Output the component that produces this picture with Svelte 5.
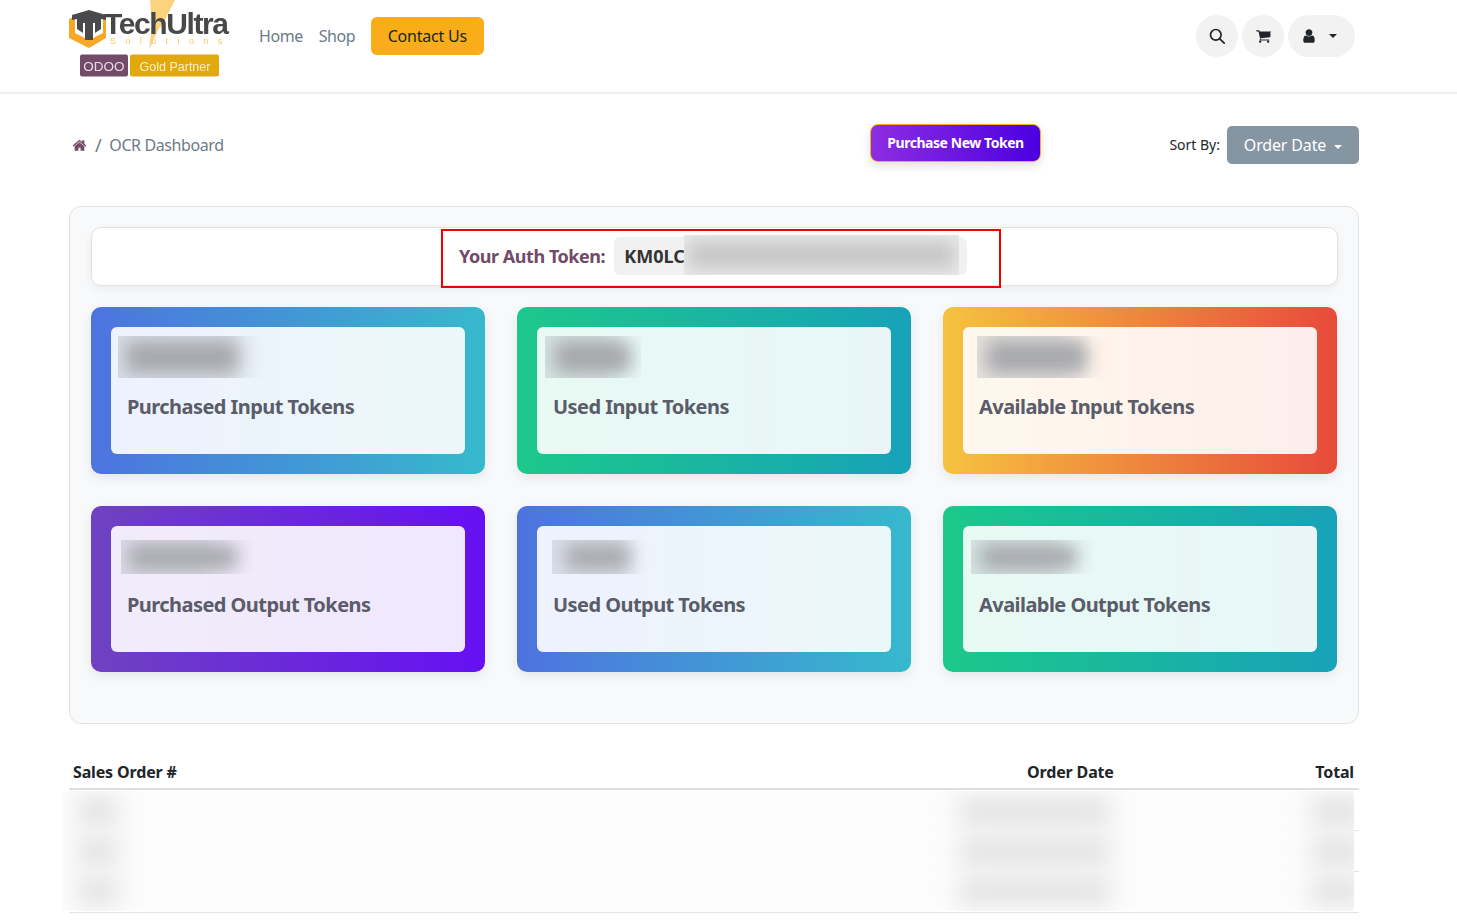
<script>
  const cards = [
    { label: 'Purchased Input Tokens', tone: 'blue', patch: [118, 172, 9, 42], blob: [8, 112], gap: 15 },
    { label: 'Used Input Tokens', tone: 'green', patch: [119, 96, 9, 42], blob: [10, 76], gap: 15 },
    { label: 'Available Input Tokens', tone: 'sunset', patch: [125, 134, 9, 42], blob: [10, 100], gap: 15 },
    { label: 'Purchased Output Tokens', tone: 'violet', patch: [121, 132, 14, 34], blob: [8, 108], gap: 17 },
    { label: 'Used Output Tokens', tone: 'blue', patch: [126, 104, 14, 34], blob: [14, 64], gap: 17 },
    { label: 'Available Output Tokens', tone: 'green', patch: [119, 122, 14, 34], blob: [10, 96], gap: 17 }
  ];
  const rows = [1, 2, 3];
</script>

<header class="topbar">
  <a class="logo" href="#home" aria-label="TechUltra Solutions, Odoo Gold Partner">
    <svg viewBox="0 0 170 78" width="170" height="78">
      <path d="M82 0h25l-11 22-6 8-9 20 3-25z" fill="#fbd27e" />
      <path d="M1 19l6-3v17l14 7 14-7V16l3 3v19L21 48 1 38z" fill="#f9a825" />
      <path d="M4 15l17-5 17 5v5l-5-1v10l-6 4V23h-2v17h-8V23h-2v10l-6-4V19l-5 1z" fill="#4a4a4c" />
      <text x="36" y="34" class="logo-name">TechUltra</text>
      <text x="42" y="44" class="logo-sub">Solutions</text>
      <rect x="12" y="54.500" width="48" height="22" rx="2" fill="#714b67" />
      <text x="36" y="70.500" class="badge-text">ODOO</text>
      <rect x="62" y="54.500" width="89" height="22" rx="2" fill="#e2a90f" />
      <text x="107" y="70.500" class="badge-text small">Gold Partner</text>
    </svg>
  </a>
  <nav class="menu">
    <a href="#home">Home</a>
    <a href="#shop">Shop</a>
    <a class="contact" href="#contact">Contact Us</a>
  </nav>
  <div class="tools">
    <button class="round" aria-label="Search">
      <svg viewBox="0 0 16 16" width="16" height="16" fill="none" stroke="#212529" stroke-width="1.700">
        <circle cx="6.800" cy="6.800" r="5.300" />
        <path d="M10.600 10.600l4.600 4.600" stroke-linecap="round" />
      </svg>
    </button>
    <button class="round" aria-label="Cart">
      <svg viewBox="0 0 1792 1792" width="16" height="16" fill="#212529">
        <path d="M704 1536q0 52-38 90t-90 38-90-38-38-90 38-90 90-38 90 38 38 90zm896 0q0 52-38 90t-90 38-90-38-38-90 38-90 90-38 90 38 38 90zm128-1088v512q0 24-16.500 42.500t-40.500 21.500l-1044 122q13 60 13 70 0 16-24 64h920q26 0 45 19t19 45-19 45-45 19H576q-26 0-45-19t-19-45q0-11 8-31.500t16-36 21.500-40 15.500-29.500l-177-823H192q-26 0-45-19t-19-45 19-45 45-19h256q16 0 28.500 6.500t19.500 15.500 13 24.500 8 26 5.500 29.500 4.500 26h1201q26 0 45 19t19 45z" />
      </svg>
    </button>
    <button class="pill" aria-label="Account">
      <svg viewBox="0 0 1792 1792" width="16" height="16" fill="#212529">
        <path d="M1536 1399q0 109-62.500 187t-150.500 78H469q-88 0-150.500-78T256 1399q0-85 8.500-160.500t31.500-152 58.500-131 94-89T583 832q131 128 313 128t313-128q76 0 134.500 34.500t94 89 58.500 131 31.500 152 8.500 160.500zm-256-887q0 159-112.500 271.500T896 896 624.500 783.500 512 512t112.500-271.500T896 128t271.500 112.500T1280 512z" />
      </svg>
      <span class="caret dark"></span>
    </button>
  </div>
</header>

<main class="page">
  <div class="crumbs">
    <div class="trail">
      <svg viewBox="0 0 1792 1792" width="15" height="15" fill="#714b67">
        <path d="M1472 992v480q0 26-19 45t-45 19h-384v-384H768v384H384q-26 0-45-19t-19-45V992q0-1 .5-3t.5-3l575-474 575 474q1 2 1 6zm223-69l-62 74q-8 9-21 11h-3q-13 0-21-7L896 424l-692 577q-12 8-24 7-13-2-21-11l-62-74q-8-10-7-23.5t11-21.5l719-599q32-26 76-26t76 26l244 204V288q0-14 9-23t23-9h192q14 0 23 9t9 23v408l219 182q10 8 11 21.5t-7 23.5z" />
      </svg>
      <span class="sep">/</span>
      <span>OCR Dashboard</span>
    </div>
    <button class="purchase">Purchase New Token</button>
    <div class="sort">
      <span>Sort By:</span>
      <button class="sort-btn">Order Date <span class="caret"></span></button>
    </div>
  </div>

  <section class="panel">
    <div class="token-bar">
      <div class="token-mark">
        <span class="token-label">Your Auth Token:</span>
        <code class="token-value">KM0LC<span class="token-veil"><i></i></span></code>
      </div>
    </div>
    <div class="card-grid">
      {#each cards as card}
        <div class="card {card.tone}">
          <div class="card-body" style="padding-top: {card.patch[2]}px">
            <div class="card-veil" style="width: {card.patch[1]}px; height: {card.patch[3]}px; margin-left: {card.patch[0] - 111}px">
              <i style="left: {card.blob[0]}px; width: {card.blob[1]}px"></i>
            </div>
            <div class="card-label" style="margin-top: {card.gap}px">{card.label}</div>
          </div>
        </div>
      {/each}
    </div>
  </section>

  <div class="orders">
    <div class="orders-head">
      <span class="col-name">Sales Order #</span>
      <span class="col-date">Order Date</span>
      <span class="col-total">Total</span>
    </div>
    <div class="orders-body">
      {#each rows as row}
        <div class="orders-row"></div>
      {/each}
      <div class="orders-veil">
        {#each rows as row}
          <div class="veil-row">
            <i class="b-name"></i>
            <i class="b-date"></i>
            <i class="b-total"></i>
          </div>
        {/each}
      </div>
    </div>
  </div>
</main>

<style>
  :global(body) {
    margin: 0;
    background: #fff;
    color: #212529;
    font-family: "Noto Sans", "Open Sans", sans-serif;
    overflow: hidden;
  }

  button {
    font-family: inherit;
    cursor: pointer;
  }

  .topbar {
    display: flex;
    align-items: center;
    height: 94px;
    box-sizing: border-box;
    padding: 0 102px 20px 68px;
    border-bottom: 2px solid #f0f0f0;
    overflow: hidden;
  }

  .logo {
    display: block;
    width: 170px;
    height: 78px;
    align-self: flex-start;
  }

  .logo svg {
    display: block;
    filter: blur(0.3px);
  }

  .logo-name {
    font: 700 30px "Liberation Sans", sans-serif;
    letter-spacing: -1.4px;
    fill: #48484a;
  }

  .logo-sub {
    font: 400 9px "Liberation Sans", sans-serif;
    letter-spacing: 9.400px;
    fill: #fbc866;
  }

  .badge-text {
    font: 400 13.500px "Liberation Sans", sans-serif;
    fill: #e6dbe3;
    text-anchor: middle;
  }

  .badge-text.small {
    font-size: 12.500px;
    fill: #fbeec6;
  }

  .menu {
    display: flex;
    align-items: center;
    margin-left: 21px;
    font-size: 16px;
    letter-spacing: -0.45px;
  }

  .menu a {
    color: #6c7a89;
    text-decoration: none;
    margin-right: 16px;
  }

  .menu a.contact {
    padding: 0 16.500px;
    height: 38px;
    line-height: 38px;
    border-radius: 6px;
    background: #f9ad18;
    color: #212529;
    letter-spacing: -0.2px;
  }

  .tools {
    display: flex;
    gap: 4px;
    margin-left: auto;
  }

  .round,
  .pill {
    display: flex;
    align-items: center;
    justify-content: center;
    height: 42px;
    border: 0;
    border-radius: 21px;
    background: #f2f2f2;
    padding: 0;
  }

  .round {
    width: 42px;
  }

  .pill {
    width: 67px;
    gap: 12px;
    padding-right: 6px;
  }

  .caret {
    display: inline-block;
    width: 0;
    height: 0;
    margin-left: 4px;
    vertical-align: 2px;
    border-top: 4.500px solid #fff;
    border-left: 4.500px solid transparent;
    border-right: 4.500px solid transparent;
  }

  .caret.dark {
    border-top-color: #212529;
    margin-left: 0;
  }

  .page {
    width: 1290px;
    margin-left: 69px;
  }

  .crumbs {
    display: grid;
    grid-template-columns: 801px auto 1fr;
    align-items: center;
    height: 111px;
    box-sizing: border-box;
    padding-bottom: 10px;
  }

  .trail {
    display: flex;
    align-items: center;
    gap: 8px;
    padding: 1px 0 0 3px;
    font-size: 16px;
    letter-spacing: -0.4px;
    color: #6c7a89;
  }

  .sep {
    font-size: 18px;
  }

  .purchase {
    width: 171px;
    height: 38px;
    margin-top: -4px;
    padding: 0;
    border: 1px solid #f9ad18;
    border-radius: 8px;
    background: linear-gradient(90deg, #8e2de2, #4a00e0);
    color: #fff;
    font-size: 14px;
    font-weight: 700;
    letter-spacing: -0.45px;
    box-shadow: 0 4px 10px rgba(0, 0, 0, 0.12);
  }

  .sort {
    display: flex;
    align-items: center;
    justify-content: flex-end;
    gap: 7px;
    font-size: 14px;
  }

  .sort-btn {
    width: 132px;
    height: 38px;
    padding: 0;
    border: 0;
    border-radius: 5px;
    background: #8595a2;
    color: #fff;
    font-size: 16px;
    letter-spacing: -0.15px;
  }

  .panel {
    box-sizing: border-box;
    height: 518px;
    margin-top: 1px;
    padding: 20px 20px 0 21px;
    border: 1px solid #e3e3e3;
    border-radius: 12px;
    background: #f8f9fa;
  }

  .token-bar {
    display: flex;
    justify-content: center;
    height: 59px;
    box-sizing: border-box;
    border: 1px solid #e2e2e2;
    border-radius: 10px;
    background: #fff;
    box-shadow: 0 3px 8px rgba(0, 0, 0, 0.06);
  }

  .token-mark {
    display: flex;
    align-items: center;
    gap: 9px;
    box-sizing: border-box;
    width: 560px;
    height: 59px;
    margin: 1px 0 0 12px;
    padding: 0 0 6px 16.500px;
    border: 2px solid #f00000;
  }

  .token-label {
    font-size: 18px;
    font-weight: 700;
    letter-spacing: -0.45px;
    color: #714b67;
  }

  .token-value {
    position: relative;
    display: block;
    box-sizing: border-box;
    width: 353px;
    height: 38px;
    padding-left: 10px;
    border-radius: 6px;
    background: #f1f1f1;
    color: #333;
    font: 700 18px/38px "Noto Sans", sans-serif;
  }

  .token-veil {
    position: absolute;
    left: 70px;
    top: -2px;
    width: 275px;
    height: 40px;
    overflow: hidden;
    background: #eaeaea;
  }

  .token-veil i,
  .card-veil i {
    position: absolute;
    display: block;
  }

  .token-veil i {
    left: 4px;
    right: 4px;
    top: 6px;
    bottom: 6px;
    background: #c6c6c6;
    filter: blur(9px);
  }

  .card-grid {
    display: grid;
    grid-template-columns: repeat(3, 394px);
    grid-template-rows: 167px 166px;
    gap: 32px;
    margin-top: 21px;
  }

  .card {
    box-sizing: border-box;
    padding: 20px;
    border-radius: 10px;
    box-shadow: 0 4px 12px rgba(0, 0, 0, 0.08);
  }

  .blue {
    background: linear-gradient(90deg, #4e73df, #36b9cc);
  }

  .green {
    background: linear-gradient(90deg, #1cc88a, #17a2b8);
  }

  .sunset {
    background: linear-gradient(90deg, #f6c23e, #e74a3b);
  }

  .violet {
    background: linear-gradient(90deg, #6f42c1, #6610f2);
  }

  .card-body {
    height: 100%;
    box-sizing: border-box;
    border-radius: 6px;
    background: rgba(255, 255, 255, 0.9);
  }

  .card-veil {
    position: relative;
    overflow: hidden;
    background: linear-gradient(90deg, rgba(170, 175, 185, 0.3) 60%, rgba(170, 175, 185, 0) 85%);
  }

  .card-veil i {
    top: 5px;
    bottom: 5px;
    background: #a5a7ab;
    filter: blur(9px);
  }

  .card-label {
    margin-left: 16px;
    font-size: 20px;
    font-weight: 700;
    letter-spacing: -0.55px;
    color: #5a5c69;
  }

  .orders {
    margin-top: 36px;
  }

  .orders-head {
    display: flex;
    align-items: center;
    box-sizing: border-box;
    height: 30px;
    padding: 0 5px 4px 4px;
    border-bottom: 2px solid #dedede;
    font-size: 16px;
    font-weight: 700;
    letter-spacing: -0.15px;
    white-space: nowrap;
  }

  .col-name {
    width: 954px;
  }

  .col-total {
    margin-left: auto;
  }

  .orders-body {
    position: relative;
  }

  .orders-row {
    box-sizing: border-box;
    height: 41px;
    border-bottom: 1px solid #e2e2e2;
  }

  .orders-veil {
    position: absolute;
    left: -7px;
    top: 1px;
    width: 1292px;
    height: 120px;
    overflow: hidden;
    background: #fcfcfc;
  }

  .veil-row {
    position: relative;
    height: 40px;
  }

  .veil-row i {
    position: absolute;
    top: 6px;
    height: 28px;
    background: #e4e2e4;
    filter: blur(11px);
  }

  .b-name {
    left: 16px;
    width: 40px;
  }

  .b-date {
    left: 898px;
    width: 150px;
  }

  .b-total {
    left: 1250px;
    width: 50px;
  }
</style>
